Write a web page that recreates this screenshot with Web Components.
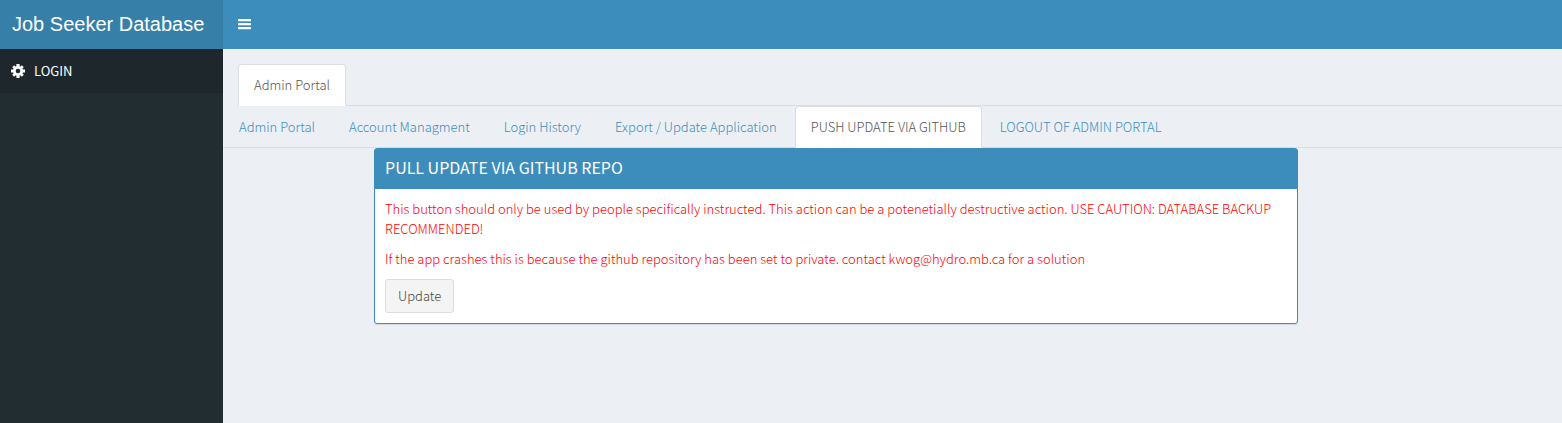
<!DOCTYPE html>
<html lang="en">
<head>
<meta charset="utf-8">
<meta name="viewport" content="width=device-width, initial-scale=1">
<title>Job Seeker Database</title>
<style>
  body {
    margin: 0;
    font: 300 13px/20px "Source Sans Pro", "Noto Sans CJK SC", "Open Sans", sans-serif;
    color: #333;
    background: #ecf0f5;
  }
</style>
</head>
<body>
<dashboard-page>
  <app-brand slot="brand">Job Seeker Database</app-brand>
  <app-navbar slot="navbar"></app-navbar>
  <side-item slot="sidebar">LOGIN</side-item>
  <tab-bar inset>
    <tab-item active>Admin Portal</tab-item>
  </tab-bar>
  <tab-bar>
    <tab-item>Admin Portal</tab-item>
    <tab-item>Account Managment</tab-item>
    <tab-item>Login History</tab-item>
    <tab-item>Export / Update Application</tab-item>
    <tab-item active>PUSH UPDATE VIA GITHUB</tab-item>
    <tab-item>LOGOUT OF ADMIN PORTAL</tab-item>
  </tab-bar>
  <info-panel>
    <span slot="title">PULL UPDATE VIA GITHUB REPO</span>
    <warning-text>This button should only be used by people specifically instructed. This action can be a potenetially destructive action. USE CAUTION: DATABASE BACKUP RECOMMENDED!</warning-text>
    <warning-text>If the app crashes this is because the github repository has been set to private. contact kwog@hydro.mb.ca for a solution</warning-text>
    <action-button>Update</action-button>
  </info-panel>
</dashboard-page>
<script>
const define = (name, html) => {
  const template = document.createElement('template');
  template.innerHTML = html;
  customElements.define(name, class extends HTMLElement {
    constructor() {
      super();
      this.attachShadow({ mode: 'open' }).append(template.content.cloneNode(true));
    }
  });
};

define('dashboard-page', `
<style>
  :host { display: grid; grid-template: auto 1fr / 223px minmax(0, 1fr); min-height: 100vh; }
  header { display: contents; }
  aside { background: #222d32; }
</style>
<header><slot name="brand"></slot><slot name="navbar"></slot></header>
<aside><slot name="sidebar"></slot></aside>
<main><slot></slot></main>`);

define('app-brand', `
<style>
  :host { display: block; background: #367fa9; height: 49px; }
  a { display: block; padding: 0 12px; font: 20px/48px "Liberation Sans", Arial, sans-serif; color: #fff; text-decoration: none; white-space: nowrap; }
</style>
<a href="#"><slot></slot></a>`);

define('app-navbar', `
<style>
  :host { display: flex; background: #3c8dbc; }
  button { display: flex; align-items: center; padding: 0 15px; border: 0; background: none; color: #fff; }
</style>
<button type="button" aria-label="Toggle navigation"><svg width="13" height="13" viewBox="0 0 13 13" fill="currentColor" aria-hidden="true"><rect y="1" width="13" height="2.3" rx=".4"/><rect y="5" width="13" height="2.3" rx=".4"/><rect y="9" width="13" height="2.3" rx=".4"/></svg></button>`);

define('side-item', `
<style>
  :host { display: block; background: #1e282c; font-weight: 400; }
  a { display: flex; align-items: center; gap: 8px; padding: 12px 10px; color: #fff; text-decoration: none; }
</style>
<a href="#"><svg width="16" height="16" viewBox="0 0 16 16" aria-hidden="true"><g stroke="#fff" stroke-width="3.2"><path d="M8 1v14M1 8h14"/><path stroke-width="2.8" d="M3.2 3.2l9.6 9.6M12.8 3.2l-9.6 9.6"/></g><circle cx="8" cy="8" r="5" fill="#fff"/><circle cx="8" cy="8" r="2.3" fill="#1e282c"/></svg><slot></slot></a>`);

define('tab-bar', `
<style>
  :host { display: block; }
  :host([inset]) { padding: 15px 0 0 15px; }
  nav { display: flex; gap: 2px; border-bottom: 1px solid #ddd; }
</style>
<nav><slot></slot></nav>`);

define('tab-item', `
<style>
  :host { display: block; margin-bottom: -1px; }
  a { display: block; padding: 10px 15px; border: 1px solid transparent; border-radius: 4px 4px 0 0; color: #3c8dbc; text-decoration: none; white-space: nowrap; }
  :host([active]) a { color: #555; background: #fff; border-color: #ddd #ddd transparent; }
</style>
<a href="#"><slot></slot></a>`);

define('info-panel', `
<style>
  :host { display: grid; grid-template-columns: 151fr 924fr 264fr; }
  section { grid-column: 2; border: 1px solid #3c8dbc; border-radius: 3px; background: #fff; box-shadow: 0 1px 1px rgba(0,0,0,.1); }
  h3 { margin: 0; padding: 8px 10px 12px; background: #3c8dbc; color: #fff; font-size: 16px; font-weight: 400; line-height: 20px; }
  div { display: flex; flex-direction: column; align-items: flex-start; gap: 10px; padding: 10px; }
</style>
<section><h3><slot name="title"></slot></h3><div><slot></slot></div></section>`);

define('warning-text', `
<style>
  :host { display: block; color: #f00; }
  p { margin: 0; }
</style>
<p><slot></slot></p>`);

define('action-button', `
<style>
  :host { display: block; }
  button { display: block; padding: 6px 12px; border: 1px solid #ddd; border-radius: 3px; background: #f4f4f4; color: #444; font: inherit; }
</style>
<button type="button"><slot></slot></button>`);
</script>
</body>
</html>
